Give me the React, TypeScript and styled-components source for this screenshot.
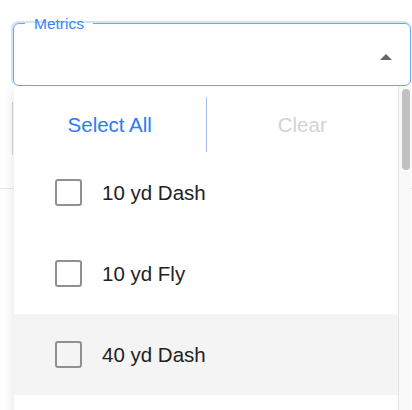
import styled, { createGlobalStyle } from "styled-components";

const GlobalStyle = createGlobalStyle`
  html, body {
    margin: 0;
    height: 100%;
    overflow: hidden;
    background: #fff;
    font-family: "Liberation Sans", Arial, sans-serif;
  }
`;

const Page = styled.div`
  display: flex;
  flex-direction: column;
  padding-top: 15px;
`;

const SelectWrap = styled.div`
  position: relative;
  margin: 0 1px 0 13px;
  z-index: 2;
`;

const Field = styled.fieldset`
  margin: 0;
  padding: 0 18px 0 11px;
  min-width: 0;
  border: 1px solid #6aa6f4;
  border-radius: 6px;
  box-shadow: -1px -1px 0 1px #d3e3fc;
`;

const Legend = styled.legend`
  padding: 0 9px;
  font-size: 15.5px;
  line-height: 17px;
  color: #3985f5;
`;

const Control = styled.div`
  height: 53px;
  display: flex;
  align-items: center;
  justify-content: flex-end;
  padding-bottom: 4px;
  box-sizing: border-box;
`;

const Caret = styled.span`
  width: 0;
  height: 0;
  border-left: 6px solid transparent;
  border-right: 6px solid transparent;
  border-bottom: 6px solid #666;
`;

const Menu = styled.div`
  position: absolute;
  top: 100%;
  left: 1px;
  right: 0;
  height: 326px;
  display: flex;
  background: #fff;
  overflow: hidden;
  box-shadow: -3px 4px 8px rgba(0, 0, 0, 0.08);
`;

const List = styled.div`
  flex: 1;
  display: flex;
  flex-direction: column;
`;

const Actions = styled.div`
  display: flex;
  padding-top: 11px;
`;

const ActionButton = styled.button<{ $muted?: boolean; $divided?: boolean }>`
  flex: 1;
  height: 55px;
  background: none;
  border: none;
  border-left: ${(p) => (p.$divided ? "1px solid #a8bdf0" : "none")};
  font-family: inherit;
  font-size: 20.5px;
  color: ${(p) => (p.$muted ? "#d3d3d3" : "#2b7bf7")};
  padding: 0;
  cursor: pointer;
`;

const Item = styled.div<{ $active?: boolean }>`
  height: 81px;
  flex-shrink: 0;
  display: flex;
  align-items: center;
  gap: 20px;
  padding-left: 41px;
  background: ${(p) => (p.$active ? "#f4f4f4" : "transparent")};
`;

const Box = styled.span`
  width: 27px;
  height: 27px;
  box-sizing: border-box;
  border: 2.5px solid #909090;
  border-radius: 3px;
`;

const ItemLabel = styled.span`
  font-size: 20.5px;
  color: #222;
`;

const ScrollTrack = styled.div`
  width: 13px;
  box-sizing: border-box;
  border-left: 1px solid #e3e3e3;
  background: #f9f9f9;
  padding: 3px 1px 0 3px;
`;

const Thumb = styled.div`
  width: 8px;
  height: 81px;
  border-radius: 4px;
  background: #c1c1c1;
`;

const Backdrop = styled.div`
  height: 103px;
  box-sizing: border-box;
  border-bottom: 1px solid #e8e8e8;
  padding: 16px 0 0 12px;
`;

const VRule = styled.div`
  width: 1px;
  height: 53px;
  background: #d6d6d6;
`;

const metrics = ["10 yd Dash", "10 yd Fly", "40 yd Dash"];

export default function App() {
  return (
    <>
      <GlobalStyle />
      <Page>
        <SelectWrap>
          <Field>
            <Legend>Metrics</Legend>
            <Control>
              <Caret />
            </Control>
          </Field>
          <Menu>
            <List>
              <Actions>
                <ActionButton>Select All</ActionButton>
                <ActionButton $muted $divided>
                  Clear
                </ActionButton>
              </Actions>
              {metrics.map((m, i) => (
                <Item key={m} $active={i === 2}>
                  <Box />
                  <ItemLabel>{m}</ItemLabel>
                </Item>
              ))}
            </List>
            <ScrollTrack>
              <Thumb />
            </ScrollTrack>
          </Menu>
        </SelectWrap>
        <Backdrop>
          <VRule />
        </Backdrop>
      </Page>
    </>
  );
}
